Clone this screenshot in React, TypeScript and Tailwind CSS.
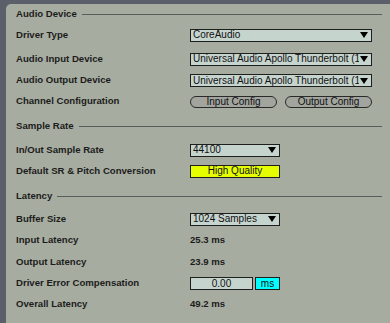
import type { ReactNode } from 'react'

const font = { fontFamily: '"Liberation Sans", Arial, sans-serif' }

function Header({ title, h }: { title: string; h: string }) {
  return (
    <div className={`flex items-center ${h}`}>
      <span className="text-[9.6px] font-bold text-[#1c1c1c]">{title}</span>
      <div className="ml-[5px] h-px flex-1 bg-[#585c5c]" />
    </div>
  )
}

function Row({ label, h, children }: { label: string; h: string; children?: ReactNode }) {
  return (
    <div className={`flex items-center ${h}`}>
      <div className="w-[174px] shrink-0 text-[9.6px] font-bold text-[#1c1c1c]">{label}</div>
      {children}
    </div>
  )
}

function Select({ value, w }: { value: string; w: string }) {
  return (
    <div className={`flex h-[13px] ${w} items-center border border-[#1e1e1e] bg-[#c6d4ce] pl-[2px] pr-[3px]`}>
      <span className="flex-1 overflow-hidden whitespace-nowrap text-[10px] leading-none text-[#111]">{value}</span>
      <svg width="8" height="6" viewBox="0 0 8 6" className="ml-[1px] shrink-0">
        <polygon points="0,0 8,0 4,6" fill="#000" />
      </svg>
    </div>
  )
}

function Pill({ label }: { label: string }) {
  return (
    <div className="flex h-[12px] w-[87px] items-center justify-center rounded-full border border-[#2a2a2a] bg-[#a2a59e] text-[10px] leading-none text-[#111]">
      {label}
    </div>
  )
}

function Value({ text }: { text: string }) {
  return <span className="text-[9.6px] font-bold text-[#1c1c1c]">{text}</span>
}

export default function App() {
  return (
    <div className="h-[323px] w-[390px] overflow-hidden bg-[#5a5f6a] pl-[6px] pt-[4px]" style={font}>
      <div className="h-[400px] rounded-tl-[5px] bg-[#a7aca0] pl-[10px] pr-[8px]">
        <Header title="Audio Device" h="h-[20px]" />
        <Row label="Driver Type" h="h-[22px]">
          <Select value="CoreAudio" w="w-[182px]" />
        </Row>
        <div className="h-[2px]" />
        <Row label="Audio Input Device" h="h-[22px]">
          <Select value="Universal Audio Apollo Thunderbolt (1394)" w="w-[182px]" />
        </Row>
        <Row label="Audio Output Device" h="h-[21px]">
          <Select value="Universal Audio Apollo Thunderbolt (1394)" w="w-[182px]" />
        </Row>
        <Row label="Channel Configuration" h="h-[21px]">
          <div className="flex gap-[8px]">
            <Pill label="Input Config" />
            <Pill label="Output Config" />
          </div>
        </Row>
        <Header title="Sample Rate" h="h-[28px]" />
        <Row label="In/Out Sample Rate" h="h-[20px]">
          <Select value="44100" w="w-[90px]" />
        </Row>
        <Row label="Default SR & Pitch Conversion" h="h-[22px]">
          <div className="flex h-[13px] w-[90px] items-center justify-center border border-[#1e1e1e] bg-[#e5ff00] text-[10px] leading-none text-[#111]">
            High Quality
          </div>
        </Row>
        <Header title="Latency" h="h-[28px]" />
        <Row label="Buffer Size" h="h-[18px]">
          <Select value="1024 Samples" w="w-[90px]" />
        </Row>
        <Row label="Input Latency" h="h-[24px]">
          <Value text="25.3 ms" />
        </Row>
        <Row label="Output Latency" h="h-[21px]">
          <Value text="23.9 ms" />
        </Row>
        <Row label="Driver Error Compensation" h="h-[21px]">
          <div className="flex gap-[2px]">
            <div className="flex h-[13px] w-[63px] items-center justify-center border border-[#1e1e1e] bg-[#c6d4ce] text-[10px] leading-none text-[#111]">
              0.00
            </div>
            <div className="flex h-[13px] w-[25px] items-center justify-center border border-[#1e1e1e] bg-[#00ffff] text-[10px] leading-none text-[#111]">
              ms
            </div>
          </div>
        </Row>
        <Row label="Overall Latency" h="h-[20px]">
          <Value text="49.2 ms" />
        </Row>
        <Header title="Test" h="h-[30px]" />
      </div>
    </div>
  )
}
